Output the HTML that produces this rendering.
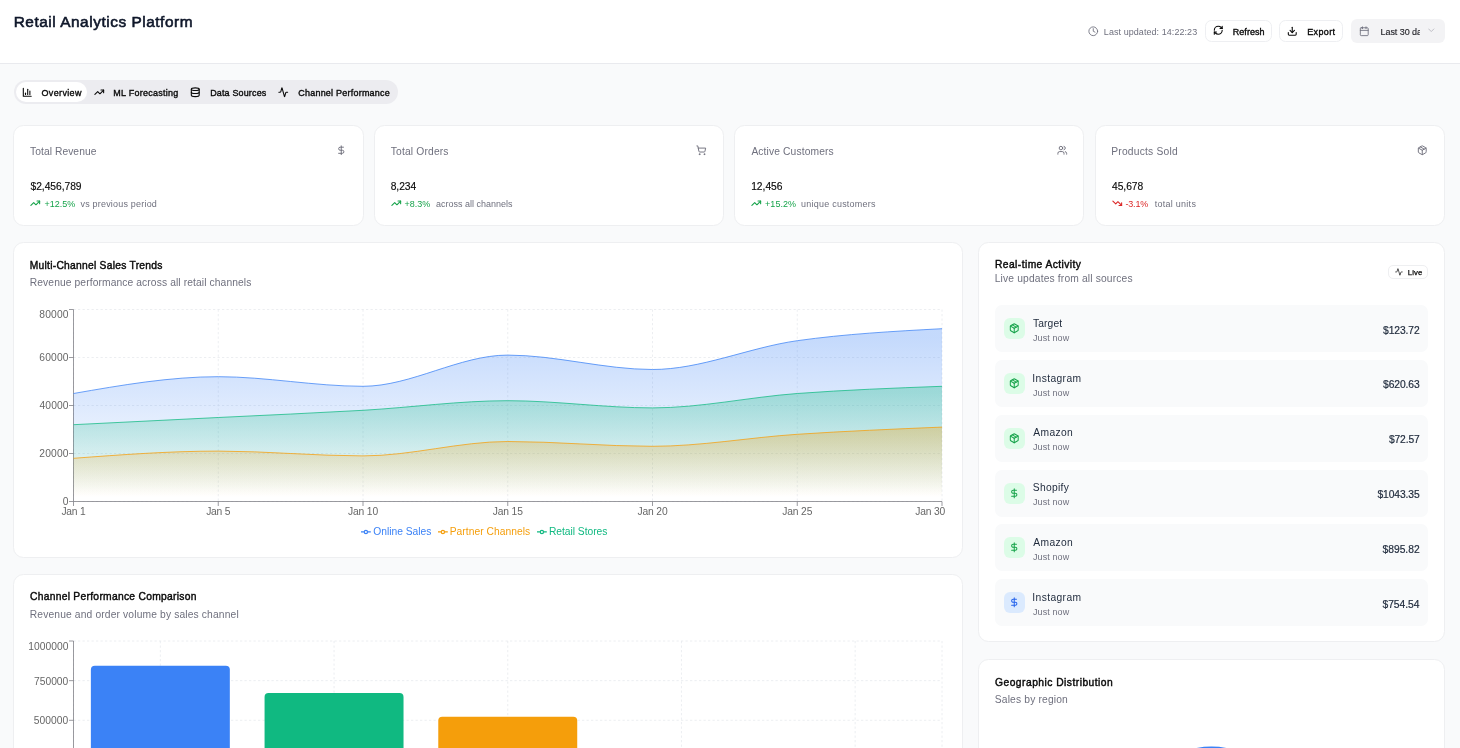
<!DOCTYPE html>
<html lang="en"><head><meta charset="utf-8"><title>Retail Analytics Platform</title>
<style>
*{box-sizing:border-box}
html,body{margin:0;padding:0}
body{width:1460px;height:748px;overflow:hidden;background:#f9fafb;font-family:'Liberation Sans', Arial, sans-serif;position:relative;color:#0a0a0a}
.t{position:absolute;white-space:pre;line-height:1}
.i{position:absolute;overflow:visible}
.b{position:absolute}
.hdr{left:0;top:0;width:1460px;height:64px;background:#fff;border-bottom:1px solid #e9eaee}
.card{background:#fff;border:1px solid #eeeff1;border-radius:10.5px}
.btn{background:#fff;border:1px solid #eeeff2;border-radius:6.5px}
.sel{background:#f3f3f5;border-radius:6px}
.tabs{background:#ececf0;border-radius:12px}
.tab{background:#fff;border-radius:10px}
.row{background:#f9fafb;border-radius:7px}
.ib{border-radius:6px}
.badge{background:#fff;border:1px solid #eeeff1;border-radius:5px}
.clip{position:absolute;overflow:hidden}
.txt{position:absolute;left:0;top:0;width:1460px;height:748px;will-change:transform}
</style></head><body>
<div class="b hdr" style="left:0px;top:0px;width:1460px;height:64px;"></div>
<div class="b btn" style="left:1205px;top:20px;width:67px;height:22px;"></div>
<div class="b btn" style="left:1279px;top:20px;width:64px;height:22px;"></div>
<div class="b sel" style="left:1351px;top:19px;width:94px;height:24px;"></div>
<svg class="i" style="left:1087.95px;top:25.95px;" width="10.5" height="10.5" viewBox="0 0 24 24" fill="none" stroke="#6f707e" stroke-width="2" stroke-linecap="round" stroke-linejoin="round"><circle cx="12" cy="12" r="10"/><polyline points="12 6 12 12 16 14"/></svg>
<svg class="i" style="left:1212.85px;top:25.15px;" width="10.5" height="10.5" viewBox="0 0 24 24" fill="none" stroke="#0a0a0a" stroke-width="2.5" stroke-linecap="round" stroke-linejoin="round"><path d="M3 12a9 9 0 0 1 9-9 9.75 9.75 0 0 1 6.74 2.74L21 8"/><path d="M21 3v5h-5"/><path d="M21 12a9 9 0 0 1-9 9 9.75 9.75 0 0 1-6.74-2.74L3 16"/><path d="M8 16H3v5"/></svg>
<svg class="i" style="left:1287.15px;top:25.75px;" width="10.5" height="10.5" viewBox="0 0 24 24" fill="none" stroke="#0a0a0a" stroke-width="2.5" stroke-linecap="round" stroke-linejoin="round"><path d="M21 15v4a2 2 0 0 1-2 2H5a2 2 0 0 1-2-2v-4"/><polyline points="7 10 12 15 17 10"/><line x1="12" x2="12" y1="15" y2="3"/></svg>
<svg class="i" style="left:1359.25px;top:25.85px;" width="10.5" height="10.5" viewBox="0 0 24 24" fill="none" stroke="#6f707e" stroke-width="2" stroke-linecap="round" stroke-linejoin="round"><path d="M8 2v4"/><path d="M16 2v4"/><rect width="18" height="18" x="3" y="4" rx="2"/><path d="M3 10h18"/></svg>
<svg class="i" style="left:1425.75px;top:25.35px;opacity:0.45;" width="10.5" height="10.5" viewBox="0 0 24 24" fill="none" stroke="#6f707e" stroke-width="2" stroke-linecap="round" stroke-linejoin="round"><path d="m6 9 6 6 6-6"/></svg>
<div class="b tabs" style="left:13.5px;top:79.6px;width:384px;height:24px;"></div>
<div class="b tab" style="left:16px;top:82px;width:71px;height:19.5px;"></div>
<svg class="i" style="left:21.75px;top:86.65px;" width="10.5" height="10.5" viewBox="0 0 24 24" fill="none" stroke="#0a0a0a" stroke-width="2.5" stroke-linecap="round" stroke-linejoin="round"><path d="M3 3v18h18"/><path d="M18 17V9"/><path d="M13 17V5"/><path d="M8 17v-3"/></svg>
<svg class="i" style="left:93.75px;top:86.65px;" width="10.5" height="10.5" viewBox="0 0 24 24" fill="none" stroke="#0a0a0a" stroke-width="2.5" stroke-linecap="round" stroke-linejoin="round"><polyline points="22 7 13.5 15.5 8.5 10.5 2 17"/><polyline points="16 7 22 7 22 13"/></svg>
<svg class="i" style="left:190.25px;top:86.65px;" width="10.5" height="10.5" viewBox="0 0 24 24" fill="none" stroke="#0a0a0a" stroke-width="2.5" stroke-linecap="round" stroke-linejoin="round"><ellipse cx="12" cy="5" rx="9" ry="3"/><path d="M3 5V19A9 3 0 0 0 21 19V5"/><path d="M3 12A9 3 0 0 0 21 12"/></svg>
<svg class="i" style="left:277.95px;top:86.65px;" width="10.5" height="10.5" viewBox="0 0 24 24" fill="none" stroke="#0a0a0a" stroke-width="2.5" stroke-linecap="round" stroke-linejoin="round"><path d="M22 12h-2.48a2 2 0 0 0-1.93 1.46l-2.35 8.36a.25.25 0 0 1-.48 0L9.24 2.18a.25.25 0 0 0-.48 0l-2.35 8.36A2 2 0 0 1 4.49 12H2"/></svg>
<div class="b card" style="left:13px;top:125px;width:351px;height:101px;"></div>
<div class="b card" style="left:374px;top:125px;width:350px;height:101px;"></div>
<div class="b card" style="left:734px;top:125px;width:350px;height:101px;"></div>
<div class="b card" style="left:1095px;top:125px;width:350px;height:101px;"></div>
<svg class="i" style="left:336.15px;top:145.25px;" width="10.5" height="10.5" viewBox="0 0 24 24" fill="none" stroke="#6b6b78" stroke-width="2.1" stroke-linecap="round" stroke-linejoin="round"><line x1="12" x2="12" y1="2" y2="22"/><path d="M17 5H9.5a3.5 3.5 0 0 0 0 7h5a3.5 3.5 0 0 1 0 7H6"/></svg>
<svg class="i" style="left:30.20px;top:197.65px;" width="10.5" height="10.5" viewBox="0 0 24 24" fill="none" stroke="#16a34a" stroke-width="2.5" stroke-linecap="round" stroke-linejoin="round"><polyline points="22 7 13.5 15.5 8.5 10.5 2 17"/><polyline points="16 7 22 7 22 13"/></svg>
<svg class="i" style="left:696.35px;top:145.25px;" width="10.5" height="10.5" viewBox="0 0 24 24" fill="none" stroke="#6b6b78" stroke-width="2.1" stroke-linecap="round" stroke-linejoin="round"><circle cx="8" cy="21" r="1"/><circle cx="19" cy="21" r="1"/><path d="M2.05 2.05h2l2.66 12.42a2 2 0 0 0 2 1.58h9.78a2 2 0 0 0 1.95-1.57l1.65-7.43H5.12"/></svg>
<svg class="i" style="left:390.85px;top:197.65px;" width="10.5" height="10.5" viewBox="0 0 24 24" fill="none" stroke="#16a34a" stroke-width="2.5" stroke-linecap="round" stroke-linejoin="round"><polyline points="22 7 13.5 15.5 8.5 10.5 2 17"/><polyline points="16 7 22 7 22 13"/></svg>
<svg class="i" style="left:1057.15px;top:145.25px;" width="10.5" height="10.5" viewBox="0 0 24 24" fill="none" stroke="#6b6b78" stroke-width="2.1" stroke-linecap="round" stroke-linejoin="round"><path d="M16 21v-2a4 4 0 0 0-4-4H6a4 4 0 0 0-4 4v2"/><circle cx="9" cy="7" r="4"/><path d="M22 21v-2a4 4 0 0 0-3-3.87"/><path d="M16 3.13a4 4 0 0 1 0 7.75"/></svg>
<svg class="i" style="left:751.35px;top:197.65px;" width="10.5" height="10.5" viewBox="0 0 24 24" fill="none" stroke="#16a34a" stroke-width="2.5" stroke-linecap="round" stroke-linejoin="round"><polyline points="22 7 13.5 15.5 8.5 10.5 2 17"/><polyline points="16 7 22 7 22 13"/></svg>
<svg class="i" style="left:1417.35px;top:145.25px;" width="10.5" height="10.5" viewBox="0 0 24 24" fill="none" stroke="#6b6b78" stroke-width="2.1" stroke-linecap="round" stroke-linejoin="round"><path d="m7.5 4.27 9 5.15"/><path d="M21 8a2 2 0 0 0-1-1.73l-7-4a2 2 0 0 0-2 0l-7 4A2 2 0 0 0 3 8v8a2 2 0 0 0 1 1.73l7 4a2 2 0 0 0 2 0l7-4A2 2 0 0 0 21 16Z"/><path d="m3.3 7 8.7 5 8.7-5"/><path d="M12 22V12"/></svg>
<svg class="i" style="left:1111.95px;top:197.65px;" width="10.5" height="10.5" viewBox="0 0 24 24" fill="none" stroke="#dc2626" stroke-width="2.5" stroke-linecap="round" stroke-linejoin="round"><polyline points="22 17 13.5 8.5 8.5 13.5 2 7"/><polyline points="16 17 22 17 22 11"/></svg>
<div class="b card" style="left:13px;top:242px;width:950px;height:316px;"></div>
<div class="b card" style="left:13px;top:574px;width:950px;height:400px;"></div>
<div class="b card" style="left:978px;top:242px;width:467px;height:400px;"></div>
<div class="b card" style="left:978px;top:659px;width:467px;height:300px;"></div>
<svg class="i" style="left:0;top:0" width="1460" height="748" viewBox="0 0 1460 748">
<defs>
<linearGradient id="g_online" x1="0" y1="0" x2="0" y2="1"><stop offset="5%" stop-color="#3b82f6" stop-opacity="0.3"/><stop offset="95%" stop-color="#3b82f6" stop-opacity="0"/></linearGradient>
<linearGradient id="g_retail" x1="0" y1="0" x2="0" y2="1"><stop offset="5%" stop-color="#10b981" stop-opacity="0.3"/><stop offset="95%" stop-color="#10b981" stop-opacity="0"/></linearGradient>
<linearGradient id="g_partner" x1="0" y1="0" x2="0" y2="1"><stop offset="5%" stop-color="#f59e0b" stop-opacity="0.3"/><stop offset="95%" stop-color="#f59e0b" stop-opacity="0"/></linearGradient>
</defs>
<g stroke="#e6e8ec" stroke-width="0.75" stroke-dasharray="2.25 2.25" fill="none">
<line x1="73.5" y1="501.50" x2="942.0" y2="501.50"/>
<line x1="73.5" y1="453.50" x2="942.0" y2="453.50"/>
<line x1="73.5" y1="405.50" x2="942.0" y2="405.50"/>
<line x1="73.5" y1="357.50" x2="942.0" y2="357.50"/>
<line x1="73.5" y1="309.50" x2="942.0" y2="309.50"/>
<line x1="73.50" y1="309.5" x2="73.50" y2="501.5"/>
<line x1="218.25" y1="309.5" x2="218.25" y2="501.5"/>
<line x1="363.00" y1="309.5" x2="363.00" y2="501.5"/>
<line x1="507.75" y1="309.5" x2="507.75" y2="501.5"/>
<line x1="652.50" y1="309.5" x2="652.50" y2="501.5"/>
<line x1="797.25" y1="309.5" x2="797.25" y2="501.5"/>
<line x1="942.00" y1="309.5" x2="942.00" y2="501.5"/>
</g>
<g stroke="#7a7a80" stroke-width="0.75" fill="none">
<line x1="73.5" y1="501.5" x2="942.0" y2="501.5"/>
<line x1="73.5" y1="309.5" x2="73.5" y2="501.5"/>
<line x1="73.50" y1="501.5" x2="73.50" y2="506.0"/>
<line x1="218.25" y1="501.5" x2="218.25" y2="506.0"/>
<line x1="363.00" y1="501.5" x2="363.00" y2="506.0"/>
<line x1="507.75" y1="501.5" x2="507.75" y2="506.0"/>
<line x1="652.50" y1="501.5" x2="652.50" y2="506.0"/>
<line x1="797.25" y1="501.5" x2="797.25" y2="506.0"/>
<line x1="942.00" y1="501.5" x2="942.00" y2="506.0"/>
<line x1="69.0" y1="501.50" x2="73.5" y2="501.50"/>
<line x1="69.0" y1="453.50" x2="73.5" y2="453.50"/>
<line x1="69.0" y1="405.50" x2="73.5" y2="405.50"/>
<line x1="69.0" y1="357.50" x2="73.5" y2="357.50"/>
<line x1="69.0" y1="309.50" x2="73.5" y2="309.50"/>
</g>
<path d="M73.50,393.50C121.75,385.10,170.00,376.70,218.25,376.70C266.50,376.70,314.75,386.30,363.00,386.30C411.25,386.30,459.50,355.10,507.75,355.10C556.00,355.10,604.25,369.50,652.50,369.50C700.75,369.50,749.00,347.50,797.25,340.70C845.50,333.90,893.75,331.30,942.00,328.70L942.0,501.5L73.5,501.5Z" fill="url(#g_online)" stroke="none"/>
<path d="M73.50,393.50C121.75,385.10,170.00,376.70,218.25,376.70C266.50,376.70,314.75,386.30,363.00,386.30C411.25,386.30,459.50,355.10,507.75,355.10C556.00,355.10,604.25,369.50,652.50,369.50C700.75,369.50,749.00,347.50,797.25,340.70C845.50,333.90,893.75,331.30,942.00,328.70" fill="none" stroke="#3b82f6" stroke-width="0.75"/>
<path d="M73.50,424.70C121.75,422.30,170.00,419.90,218.25,417.50C266.50,415.10,314.75,413.10,363.00,410.30C411.25,407.50,459.50,400.70,507.75,400.70C556.00,400.70,604.25,407.90,652.50,407.90C700.75,407.90,749.00,397.10,797.25,393.50C845.50,389.90,893.75,388.10,942.00,386.30L942.0,501.5L73.5,501.5Z" fill="url(#g_retail)" stroke="none"/>
<path d="M73.50,424.70C121.75,422.30,170.00,419.90,218.25,417.50C266.50,415.10,314.75,413.10,363.00,410.30C411.25,407.50,459.50,400.70,507.75,400.70C556.00,400.70,604.25,407.90,652.50,407.90C700.75,407.90,749.00,397.10,797.25,393.50C845.50,389.90,893.75,388.10,942.00,386.30" fill="none" stroke="#10b981" stroke-width="0.75"/>
<path d="M73.50,458.30C121.75,454.70,170.00,451.10,218.25,451.10C266.50,451.10,314.75,455.90,363.00,455.90C411.25,455.90,459.50,441.50,507.75,441.50C556.00,441.50,604.25,446.30,652.50,446.30C700.75,446.30,749.00,437.50,797.25,434.30C845.50,431.10,893.75,429.10,942.00,427.10L942.0,501.5L73.5,501.5Z" fill="url(#g_partner)" stroke="none"/>
<path d="M73.50,458.30C121.75,454.70,170.00,451.10,218.25,451.10C266.50,451.10,314.75,455.90,363.00,455.90C411.25,455.90,459.50,441.50,507.75,441.50C556.00,441.50,604.25,446.30,652.50,446.30C700.75,446.30,749.00,437.50,797.25,434.30C845.50,431.10,893.75,429.10,942.00,427.10" fill="none" stroke="#f59e0b" stroke-width="0.75"/>
</svg>
<svg class="i" style="left:0;top:0" width="1460" height="748" viewBox="0 0 1460 748">
<g stroke="#e6e8ec" stroke-width="0.75" stroke-dasharray="2.25 2.25" fill="none">
<line x1="73.5" y1="641.00" x2="942.0" y2="641.00"/>
<line x1="73.5" y1="680.65" x2="942.0" y2="680.65"/>
<line x1="73.5" y1="720.30" x2="942.0" y2="720.30"/>
<line x1="73.5" y1="759.95" x2="942.0" y2="759.95"/>
<line x1="73.5" y1="799.60" x2="942.0" y2="799.60"/>
<line x1="160.35" y1="641.0" x2="160.35" y2="799.6"/>
<line x1="334.05" y1="641.0" x2="334.05" y2="799.6"/>
<line x1="507.75" y1="641.0" x2="507.75" y2="799.6"/>
<line x1="681.45" y1="641.0" x2="681.45" y2="799.6"/>
<line x1="855.15" y1="641.0" x2="855.15" y2="799.6"/>
<line x1="73.5" y1="641.0" x2="73.5" y2="799.6"/>
<line x1="942.0" y1="641.0" x2="942.0" y2="799.6"/>
</g>
<g stroke="#7a7a80" stroke-width="0.75" fill="none">
<line x1="73.5" y1="641.0" x2="73.5" y2="799.6"/>
<line x1="69.0" y1="641.00" x2="73.5" y2="641.00"/>
<line x1="69.0" y1="680.65" x2="73.5" y2="680.65"/>
<line x1="69.0" y1="720.30" x2="73.5" y2="720.30"/>
<line x1="69.0" y1="759.95" x2="73.5" y2="759.95"/>
<line x1="69.0" y1="799.60" x2="73.5" y2="799.60"/>
</g>
<path d="M90.87,669.70A4,4,0,0,1,94.87,665.70L225.83,665.70A4,4,0,0,1,229.83,669.70L229.83,799.6L90.87,799.6Z" fill="#3b82f6"/>
<path d="M264.57,697.00A4,4,0,0,1,268.57,693.00L399.53,693.00A4,4,0,0,1,403.53,697.00L403.53,799.6L264.57,799.6Z" fill="#10b981"/>
<path d="M438.27,720.80A4,4,0,0,1,442.27,716.80L573.23,716.80A4,4,0,0,1,577.23,720.80L577.23,799.6L438.27,799.6Z" fill="#f59e0b"/>
<path d="M611.97,756.00A4,4,0,0,1,615.97,752.00L746.93,752.00A4,4,0,0,1,750.93,756.00L750.93,799.6L611.97,799.6Z" fill="#ef4444"/>
<path d="M785.67,764.00A4,4,0,0,1,789.67,760.00L920.63,760.00A4,4,0,0,1,924.63,764.00L924.63,799.6L785.67,799.6Z" fill="#8b5cf6"/>
</svg>
<svg class="i" style="left:360.80px;top:526.50px" width="9.8" height="9.8" viewBox="0 0 32 32"><path stroke-width="4" fill="none" stroke="#3b82f6" d="M0,16h10.667A5.333,5.333,0,1,1,21.333,16H32M21.333,16A5.333,5.333,0,1,1,10.667,16"/></svg>
<svg class="i" style="left:437.90px;top:526.50px" width="9.8" height="9.8" viewBox="0 0 32 32"><path stroke-width="4" fill="none" stroke="#f59e0b" d="M0,16h10.667A5.333,5.333,0,1,1,21.333,16H32M21.333,16A5.333,5.333,0,1,1,10.667,16"/></svg>
<svg class="i" style="left:536.90px;top:526.50px" width="9.8" height="9.8" viewBox="0 0 32 32"><path stroke-width="4" fill="none" stroke="#10b981" d="M0,16h10.667A5.333,5.333,0,1,1,21.333,16H32M21.333,16A5.333,5.333,0,1,1,10.667,16"/></svg>
<div class="b badge" style="left:1388px;top:265px;width:40px;height:14px;"></div>
<svg class="i" style="left:1394.75px;top:268.05px;" width="7.9" height="7.9" viewBox="0 0 24 24" fill="none" stroke="#0a0a0a" stroke-width="2.1" stroke-linecap="round" stroke-linejoin="round"><path d="M22 12h-2.48a2 2 0 0 0-1.93 1.46l-2.35 8.36a.25.25 0 0 1-.48 0L9.24 2.18a.25.25 0 0 0-.48 0l-2.35 8.36A2 2 0 0 1 4.49 12H2"/></svg>
<div class="b row" style="left:995px;top:305px;width:433px;height:47px;"></div>
<div class="b ib" style="left:1004px;top:318px;width:21px;height:21px;background:#dcfce7"></div>
<svg class="i" style="left:1009.15px;top:323.25px;" width="10.5" height="10.5" viewBox="0 0 24 24" fill="none" stroke="#16a34a" stroke-width="2.3" stroke-linecap="round" stroke-linejoin="round"><path d="m7.5 4.27 9 5.15"/><path d="M21 8a2 2 0 0 0-1-1.73l-7-4a2 2 0 0 0-2 0l-7 4A2 2 0 0 0 3 8v8a2 2 0 0 0 1 1.73l7 4a2 2 0 0 0 2 0l7-4A2 2 0 0 0 21 16Z"/><path d="m3.3 7 8.7 5 8.7-5"/><path d="M12 22V12"/></svg>
<div class="b row" style="left:995px;top:360px;width:433px;height:47px;"></div>
<div class="b ib" style="left:1004px;top:373px;width:21px;height:21px;background:#dcfce7"></div>
<svg class="i" style="left:1009.15px;top:378.25px;" width="10.5" height="10.5" viewBox="0 0 24 24" fill="none" stroke="#16a34a" stroke-width="2.3" stroke-linecap="round" stroke-linejoin="round"><path d="m7.5 4.27 9 5.15"/><path d="M21 8a2 2 0 0 0-1-1.73l-7-4a2 2 0 0 0-2 0l-7 4A2 2 0 0 0 3 8v8a2 2 0 0 0 1 1.73l7 4a2 2 0 0 0 2 0l7-4A2 2 0 0 0 21 16Z"/><path d="m3.3 7 8.7 5 8.7-5"/><path d="M12 22V12"/></svg>
<div class="b row" style="left:995px;top:415px;width:433px;height:47px;"></div>
<div class="b ib" style="left:1004px;top:428px;width:21px;height:21px;background:#dcfce7"></div>
<svg class="i" style="left:1009.15px;top:433.25px;" width="10.5" height="10.5" viewBox="0 0 24 24" fill="none" stroke="#16a34a" stroke-width="2.3" stroke-linecap="round" stroke-linejoin="round"><path d="m7.5 4.27 9 5.15"/><path d="M21 8a2 2 0 0 0-1-1.73l-7-4a2 2 0 0 0-2 0l-7 4A2 2 0 0 0 3 8v8a2 2 0 0 0 1 1.73l7 4a2 2 0 0 0 2 0l7-4A2 2 0 0 0 21 16Z"/><path d="m3.3 7 8.7 5 8.7-5"/><path d="M12 22V12"/></svg>
<div class="b row" style="left:995px;top:470px;width:433px;height:47px;"></div>
<div class="b ib" style="left:1004px;top:483px;width:21px;height:21px;background:#dcfce7"></div>
<svg class="i" style="left:1009.15px;top:488.25px;" width="10.5" height="10.5" viewBox="0 0 24 24" fill="none" stroke="#16a34a" stroke-width="2.3" stroke-linecap="round" stroke-linejoin="round"><line x1="12" x2="12" y1="2" y2="22"/><path d="M17 5H9.5a3.5 3.5 0 0 0 0 7h5a3.5 3.5 0 0 1 0 7H6"/></svg>
<div class="b row" style="left:995px;top:524px;width:433px;height:47px;"></div>
<div class="b ib" style="left:1004px;top:537px;width:21px;height:21px;background:#dcfce7"></div>
<svg class="i" style="left:1009.15px;top:542.25px;" width="10.5" height="10.5" viewBox="0 0 24 24" fill="none" stroke="#16a34a" stroke-width="2.3" stroke-linecap="round" stroke-linejoin="round"><line x1="12" x2="12" y1="2" y2="22"/><path d="M17 5H9.5a3.5 3.5 0 0 0 0 7h5a3.5 3.5 0 0 1 0 7H6"/></svg>
<div class="b row" style="left:995px;top:579px;width:433px;height:47px;"></div>
<div class="b ib" style="left:1004px;top:592px;width:21px;height:21px;background:#dbeafe"></div>
<svg class="i" style="left:1009.15px;top:597.25px;" width="10.5" height="10.5" viewBox="0 0 24 24" fill="none" stroke="#2563eb" stroke-width="2.3" stroke-linecap="round" stroke-linejoin="round"><line x1="12" x2="12" y1="2" y2="22"/><path d="M17 5H9.5a3.5 3.5 0 0 0 0 7h5a3.5 3.5 0 0 1 0 7H6"/></svg>
<svg class="i" style="left:0;top:0" width="1460" height="748" viewBox="0 0 1460 748"><circle cx="1211.5" cy="826.6" r="80" fill="#3b82f6"/></svg>
<div class="txt">
<div class="clip" style="left:1378px;top:20px;width:42.2px;height:22px"><div class="t" style="left:2.6px;top:8px;font-size:8.98px;color:#26262c;letter-spacing:-0.06px;-webkit-text-stroke:0.15px #26262c">Last 30 days</div></div>
<div class="t" style="left:13.70px;top:14px;font-size:15.4px;color:#0f172a;letter-spacing:0.535px;-webkit-text-stroke:0.6px #0f172a;">Retail Analytics Platform</div>
<div class="t" style="left:1103.85px;top:28px;font-size:8.98px;color:#6f707e;letter-spacing:0.074px;">Last updated: 14:22:23</div>
<div class="t" style="left:1232.70px;top:28px;font-size:8.98px;color:#0a0a0a;letter-spacing:0.083px;-webkit-text-stroke:0.36px #0a0a0a;">Refresh</div>
<div class="t" style="left:1307.20px;top:28px;font-size:8.98px;color:#0a0a0a;letter-spacing:0.380px;-webkit-text-stroke:0.36px #0a0a0a;">Export</div>
<div class="t" style="left:41.55px;top:89px;font-size:8.98px;color:#0a0a0a;letter-spacing:0.350px;-webkit-text-stroke:0.36px #0a0a0a;">Overview</div>
<div class="t" style="left:113.20px;top:89px;font-size:8.98px;color:#0a0a0a;letter-spacing:0.281px;-webkit-text-stroke:0.36px #0a0a0a;">ML Forecasting</div>
<div class="t" style="left:210.20px;top:89px;font-size:8.98px;color:#0a0a0a;letter-spacing:0.159px;-webkit-text-stroke:0.36px #0a0a0a;">Data Sources</div>
<div class="t" style="left:298.25px;top:89px;font-size:8.98px;color:#0a0a0a;letter-spacing:0.236px;-webkit-text-stroke:0.36px #0a0a0a;">Channel Performance</div>
<div class="t" style="left:30.05px;top:147px;font-size:10.27px;color:#6f707e;letter-spacing:0.058px;">Total Revenue</div>
<div class="t" style="left:30.50px;top:182px;font-size:10.27px;color:#0a0a0a;letter-spacing:-0.033px;-webkit-text-stroke:0.15px #0a0a0a;">$2,456,789</div>
<div class="t" style="left:44.40px;top:200px;font-size:8.98px;color:#16a34a;letter-spacing:0.040px;">+12.5%</div>
<div class="t" style="left:80.50px;top:200px;font-size:8.98px;color:#6f707e;letter-spacing:0.209px;">vs previous period</div>
<div class="t" style="left:390.75px;top:147px;font-size:10.27px;color:#6f707e;letter-spacing:0.168px;">Total Orders</div>
<div class="t" style="left:390.75px;top:182px;font-size:10.27px;color:#0a0a0a;letter-spacing:-0.088px;-webkit-text-stroke:0.15px #0a0a0a;">8,234</div>
<div class="t" style="left:404.60px;top:200px;font-size:8.98px;color:#16a34a;letter-spacing:-0.025px;">+8.3%</div>
<div class="t" style="left:435.95px;top:200px;font-size:8.98px;color:#6f707e;letter-spacing:0.014px;">across all channels</div>
<div class="t" style="left:751.40px;top:147px;font-size:10.27px;color:#6f707e;letter-spacing:0.120px;">Active Customers</div>
<div class="t" style="left:751.15px;top:182px;font-size:10.27px;color:#0a0a0a;letter-spacing:-0.010px;-webkit-text-stroke:0.15px #0a0a0a;">12,456</div>
<div class="t" style="left:765.10px;top:200px;font-size:8.98px;color:#16a34a;letter-spacing:0.040px;">+15.2%</div>
<div class="t" style="left:801.10px;top:200px;font-size:8.98px;color:#6f707e;letter-spacing:0.240px;">unique customers</div>
<div class="t" style="left:1111.25px;top:147px;font-size:10.27px;color:#6f707e;letter-spacing:0.208px;">Products Sold</div>
<div class="t" style="left:1112.00px;top:182px;font-size:10.27px;color:#0a0a0a;letter-spacing:-0.040px;-webkit-text-stroke:0.15px #0a0a0a;">45,678</div>
<div class="t" style="left:1125.50px;top:200px;font-size:8.98px;color:#dc2626;letter-spacing:-0.188px;">-3.1%</div>
<div class="t" style="left:1154.70px;top:200px;font-size:8.98px;color:#6f707e;letter-spacing:0.280px;">total units</div>
<div class="t" style="left:29.80px;top:261px;font-size:10.27px;color:#0a0a0a;letter-spacing:0.260px;-webkit-text-stroke:0.42px #0a0a0a;">Multi-Channel Sales Trends</div>
<div class="t" style="left:29.75px;top:278px;font-size:10.27px;color:#6f707e;letter-spacing:0.106px;">Revenue performance across all retail channels</div>
<div class="t" style="left:29.95px;top:592px;font-size:10.27px;color:#0a0a0a;letter-spacing:0.293px;-webkit-text-stroke:0.42px #0a0a0a;">Channel Performance Comparison</div>
<div class="t" style="left:29.75px;top:610px;font-size:10.27px;color:#6f707e;letter-spacing:0.144px;">Revenue and order volume by sales channel</div>
<div class="t" style="left:995.00px;top:260px;font-size:10.27px;color:#0a0a0a;letter-spacing:0.424px;-webkit-text-stroke:0.42px #0a0a0a;">Real-time Activity</div>
<div class="t" style="left:994.75px;top:274px;font-size:10.27px;color:#6f707e;letter-spacing:0.154px;">Live updates from all sources</div>
<div class="t" style="left:1407.70px;top:269px;font-size:7.7px;color:#0a0a0a;letter-spacing:0.200px;-webkit-text-stroke:0.25px #0a0a0a;">Live</div>
<div class="t" style="left:1033.05px;top:319px;font-size:10.27px;color:#1e293b;letter-spacing:0.090px;">Target</div>
<div class="t" style="left:1032.95px;top:334px;font-size:8.98px;color:#6f707e;letter-spacing:0.121px;">Just now</div>
<div class="t" style="left:1383.10px;top:326px;font-size:10.27px;color:#1e293b;letter-spacing:-0.092px;-webkit-text-stroke:0.2px #1e293b;">$123.72</div>
<div class="t" style="left:1032.30px;top:374px;font-size:10.27px;color:#1e293b;letter-spacing:0.388px;">Instagram</div>
<div class="t" style="left:1032.95px;top:389px;font-size:8.98px;color:#6f707e;letter-spacing:0.121px;">Just now</div>
<div class="t" style="left:1383.10px;top:380px;font-size:10.27px;color:#1e293b;letter-spacing:-0.092px;-webkit-text-stroke:0.2px #1e293b;">$620.63</div>
<div class="t" style="left:1033.30px;top:428px;font-size:10.27px;color:#1e293b;letter-spacing:0.360px;">Amazon</div>
<div class="t" style="left:1032.95px;top:443px;font-size:8.98px;color:#6f707e;letter-spacing:0.121px;">Just now</div>
<div class="t" style="left:1388.90px;top:435px;font-size:10.27px;color:#1e293b;letter-spacing:-0.120px;-webkit-text-stroke:0.2px #1e293b;">$72.57</div>
<div class="t" style="left:1032.80px;top:483px;font-size:10.27px;color:#1e293b;letter-spacing:0.308px;">Shopify</div>
<div class="t" style="left:1032.95px;top:498px;font-size:8.98px;color:#6f707e;letter-spacing:0.121px;">Just now</div>
<div class="t" style="left:1377.40px;top:490px;font-size:10.27px;color:#1e293b;letter-spacing:-0.086px;-webkit-text-stroke:0.2px #1e293b;">$1043.35</div>
<div class="t" style="left:1033.30px;top:538px;font-size:10.27px;color:#1e293b;letter-spacing:0.360px;">Amazon</div>
<div class="t" style="left:1032.95px;top:553px;font-size:8.98px;color:#6f707e;letter-spacing:0.121px;">Just now</div>
<div class="t" style="left:1382.50px;top:545px;font-size:10.27px;color:#1e293b;letter-spacing:0.008px;-webkit-text-stroke:0.2px #1e293b;">$895.82</div>
<div class="t" style="left:1032.30px;top:593px;font-size:10.27px;color:#1e293b;letter-spacing:0.388px;">Instagram</div>
<div class="t" style="left:1032.95px;top:608px;font-size:8.98px;color:#6f707e;letter-spacing:0.121px;">Just now</div>
<div class="t" style="left:1382.50px;top:600px;font-size:10.27px;color:#1e293b;letter-spacing:-0.033px;-webkit-text-stroke:0.2px #1e293b;">$754.54</div>
<div class="t" style="left:995.05px;top:678px;font-size:10.27px;color:#0a0a0a;letter-spacing:0.473px;-webkit-text-stroke:0.42px #0a0a0a;">Geographic Distribution</div>
<div class="t" style="left:994.80px;top:695px;font-size:10.27px;color:#6f707e;letter-spacing:0.161px;">Sales by region</div>
<div class="t" style="left:62.70px;top:497px;font-size:10.27px;color:#666666;letter-spacing:0.250px">0</div>
<div class="t" style="left:39.30px;top:449px;font-size:10.27px;color:#666666;letter-spacing:0.162px">20000</div>
<div class="t" style="left:39.55px;top:401px;font-size:10.27px;color:#666666;letter-spacing:0.100px">40000</div>
<div class="t" style="left:39.30px;top:353px;font-size:10.27px;color:#666666;letter-spacing:0.162px">60000</div>
<div class="t" style="left:39.30px;top:310px;font-size:10.27px;color:#666666;letter-spacing:0.162px">80000</div>
<div class="t" style="left:61.40px;top:507px;font-size:10.27px;color:#666666;letter-spacing:-0.200px">Jan 1</div>
<div class="t" style="left:206.15px;top:507px;font-size:10.27px;color:#666666;letter-spacing:-0.200px">Jan 5</div>
<div class="t" style="left:347.95px;top:507px;font-size:10.27px;color:#666666;letter-spacing:-0.130px">Jan 10</div>
<div class="t" style="left:492.70px;top:507px;font-size:10.27px;color:#666666;letter-spacing:-0.130px">Jan 15</div>
<div class="t" style="left:637.45px;top:507px;font-size:10.27px;color:#666666;letter-spacing:-0.130px">Jan 20</div>
<div class="t" style="left:782.20px;top:507px;font-size:10.27px;color:#666666;letter-spacing:-0.130px">Jan 25</div>
<div class="t" style="left:915.15px;top:507px;font-size:10.27px;color:#666666;letter-spacing:-0.130px">Jan 30</div>
<div class="t" style="left:373.20px;top:527px;font-size:10.27px;color:#3b82f6;letter-spacing:0.005px">Online Sales</div>
<div class="t" style="left:449.65px;top:527px;font-size:10.27px;color:#f59e0b;letter-spacing:0.043px">Partner Channels</div>
<div class="t" style="left:548.95px;top:527px;font-size:10.27px;color:#10b981;letter-spacing:-0.029px">Retail Stores</div>
<div class="t" style="left:28.25px;top:642px;font-size:10.27px;color:#666666;letter-spacing:0.042px">1000000</div>
<div class="t" style="left:34.00px;top:677px;font-size:10.27px;color:#666666;letter-spacing:0.000px">750000</div>
<div class="t" style="left:33.70px;top:716px;font-size:10.27px;color:#666666;letter-spacing:0.040px">500000</div>
</div>
</body></html>
